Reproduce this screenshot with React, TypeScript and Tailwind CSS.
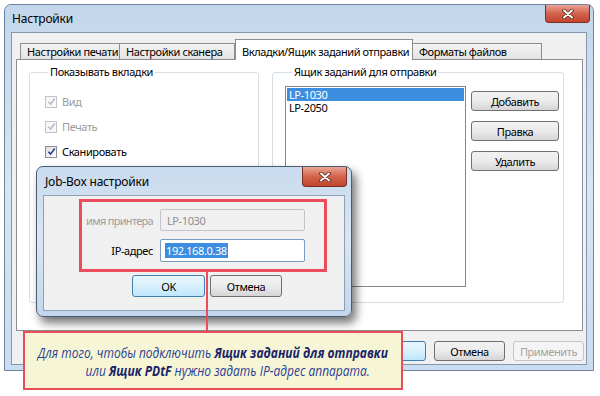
import type { ReactNode } from "react";

function CloseButton({ className = "" }: { className?: string }) {
  return (
    <div
      className={`flex items-center justify-center rounded-b-[4px] border border-t-0 border-[#7a2f24] bg-gradient-to-b from-[#e8a593] via-[#d3634d] to-[#c0452c] ${className}`}
    >
      <svg viewBox="0 0 12 10" className="h-[10px] w-[12px]">
        <path d="M2 1.5 L10 8.5 M10 1.5 L2 8.5" stroke="#5b2117" strokeWidth="3.6" strokeLinecap="round" />
        <path d="M2 1.5 L10 8.5 M10 1.5 L2 8.5" stroke="#ffffff" strokeWidth="2" strokeLinecap="round" />
      </svg>
    </div>
  );
}

function Btn({
  children,
  className = "",
  focused,
  disabled,
}: {
  children?: ReactNode;
  className?: string;
  focused?: boolean;
  disabled?: boolean;
}) {
  const look = focused
    ? "border-[#3c7fb1] bg-gradient-to-b from-[#eaf6fd] via-[#d9f0fc] to-[#bee6fd] text-black"
    : disabled
      ? "border-[#c4c4c4] bg-[#f4f4f4] text-[#a3a3a3]"
      : "border-[#707070] bg-gradient-to-b from-[#f2f2f2] via-[#ebebeb] to-[#d5d5d5] text-black";
  return (
    <div className={`flex items-center justify-center whitespace-nowrap rounded-[3px] border ${look} ${className}`}>
      {children}
    </div>
  );
}

function Check({ label, disabled }: { label: string; disabled?: boolean }) {
  return (
    <div className="flex h-[13px] items-center gap-[5px]">
      <span
        className={`flex h-[12px] w-[12px] items-center justify-center border ${
          disabled ? "border-[#c0c3c8] bg-[#f7f7f7]" : "border-[#8e8f8f] bg-gradient-to-br from-[#dcdcdc] to-white"
        }`}
      >
        <svg viewBox="0 0 10 10" className="h-[9px] w-[9px]">
          <path
            d="M1.6 5.3 L4 7.9 L8.6 1.6"
            fill="none"
            stroke={disabled ? "#b9b9b9" : "#26388f"}
            strokeWidth="1.7"
          />
        </svg>
      </span>
      <span className={disabled ? "text-[#9b9b9b]" : "text-black"}>{label}</span>
    </div>
  );
}

function Tab({ label, className = "" }: { label: string; className?: string }) {
  return (
    <div
      className={`flex h-[16px] items-center border border-b-0 border-[#8c8e94] bg-gradient-to-b from-[#f3f3f3] to-[#e3e3e3] pl-[6px] ${className}`}
    >
      {label}
    </div>
  );
}

export default function App() {
  return (
    <div className="relative h-[396px] w-[600px] overflow-hidden whitespace-nowrap bg-white font-['Noto_Sans',sans-serif] text-[11px] leading-[15px] tracking-[-0.4px] text-black">
      {/* main window */}
      <div className="relative ml-[4px] mt-[4px] flex h-[367px] w-[590px] flex-col rounded-t-[7px] border border-[#6d84a0] bg-gradient-to-b from-[#c3d6eb] via-[#d8e5f3] to-[#cadcef] px-[6px] pb-[5px]">
        <div className="flex h-[27px] items-center pl-[1px] text-[12px] tracking-[-0.2px]">Настройки</div>
        <CloseButton className="absolute right-[3px] top-0 h-[18px] w-[45px]" />

        <div className="flex flex-1 flex-col border border-[#8497b0] bg-[#f0f0f0]">
          {/* tabs */}
          <div className="ml-[8px] mt-[6px] flex h-[20px] items-end">
            <Tab label="Настройки печати" className="w-[100px]" />
            <Tab label="Настройки сканера" className="w-[115px] border-l-0" />
            <div className="relative z-10 -mb-px flex h-[21px] w-[178px] items-center border border-b-0 border-[#8c8e94] bg-white pl-[6px] pt-[2px]">
              Вкладки/Ящик заданий отправки
            </div>
            <Tab label="Форматы файлов" className="w-[129px] border-l-0" />
          </div>

          {/* panel */}
          <div className="ml-[4px] mr-[3px] flex h-[272px] gap-[13px] border border-[#8c8e94] bg-white pl-[12px] pt-[4px]">
            <fieldset className="h-[239px] w-[230px] rounded-[3px] border border-[#d5dfe5] pl-[15px]">
              <legend className="ml-[3px] px-[2px] leading-[16px]">Показывать вкладки</legend>
              <div className="flex flex-col gap-[12px] pt-[15px]">
                <Check label="Вид" disabled />
                <Check label="Печать" disabled />
                <Check label="Сканировать" />
              </div>
            </fieldset>
            <fieldset className="h-[239px] w-[292px] rounded-[3px] border border-[#d5dfe5] pl-[12px]">
              <legend className="ml-[7px] px-[2px] leading-[16px]">Ящик заданий для отправки</legend>
              <div className="flex gap-[5px] pt-[6px]">
                <div className="flex h-[201px] w-[181px] flex-col border border-[#828790] bg-white p-[1px]">
                  <div className="h-[13px] bg-[#3d8ee0] pl-[2px] leading-[13px] text-white">LP-1030</div>
                  <div className="h-[13px] pl-[2px] leading-[13px]">LP-2050</div>
                </div>
                <div className="flex flex-col gap-[10px] pt-[5px]">
                  <Btn className="h-[20px] w-[88px]">Добавить</Btn>
                  <Btn className="h-[20px] w-[88px]">Правка</Btn>
                  <Btn className="h-[20px] w-[88px]">Удалить</Btn>
                </div>
              </div>
            </fieldset>
          </div>

          {/* bottom buttons */}
          <div className="mr-[2px] mt-[10px] flex justify-end gap-[8px]">
            <Btn focused className="h-[20px] w-[71px]">ОК</Btn>
            <Btn className="h-[20px] w-[71px]">Отмена</Btn>
            <Btn disabled className="h-[20px] w-[71px]">Применить</Btn>
          </div>
        </div>
      </div>

      {/* Job-Box dialog */}
      <div className="absolute left-[36px] top-[166px] flex h-[151px] w-[316px] flex-col rounded-[7px] border border-[#4b5b70] bg-gradient-to-b from-[#c9dbee] via-[#d9e6f4] to-[#c3d7ec] px-[6px] pb-[5px] shadow-[4px_6px_10px_rgba(0,0,0,0.55)]">
        <div className="flex h-[28px] items-center pl-[2px] text-[12px] tracking-[-0.2px]">Job-Box настройки</div>
        <CloseButton className="absolute right-[4px] top-0 h-[20px] w-[45px]" />
        <div className="flex-1 border border-[#8da0b8] bg-[#f0f0f0]">
          <div className="ml-[35px] mt-[3px] flex h-[73px] w-[248px] flex-col gap-[8px] border-[3px] border-[#ec4d5c] pt-[7px]">
            <div className="flex items-center gap-[7px]">
              <div className="flex w-[71px] justify-end tracking-[-0.7px] text-[#9d9d9d]">имя принтера</div>
              <div className="flex h-[22px] w-[145px] items-center rounded-[2px] border border-[#c2c6cc] bg-[#f0f0f0] pl-[6px] text-[#8e8e8e]">
                LP-1030
              </div>
            </div>
            <div className="flex items-center gap-[7px]">
              <div className="flex w-[71px] justify-end">IP-адрес</div>
              <div className="flex h-[23px] w-[145px] items-center rounded-[2px] border border-[#7a9cc2] bg-white pl-[4px]">
                <span className="bg-[#3d8ee0] px-[1px] text-white">192.168.0.38</span>
              </div>
            </div>
          </div>
          <div className="ml-[88px] mt-[3px] flex gap-[5px]">
            <Btn focused className="h-[22px] w-[73px]">OK</Btn>
            <Btn className="h-[22px] w-[72px]">Отмена</Btn>
          </div>
        </div>
      </div>

      {/* annotation */}
      <div className="absolute left-[206px] top-[271px] h-[62px] w-[2px] bg-[#ec4d5c]" />
      <div className="absolute left-[23px] top-[331px] flex h-[59px] w-[380px] flex-col items-center justify-center overflow-hidden border-2 border-[#e94c5b] bg-[#f6f6d6] font-['Open_Sans',sans-serif] text-[15px] italic leading-[18px] tracking-normal text-[#2d3d94]">
        <div className="flex scale-x-[0.8] flex-col items-center">
          <p>
            Для того, чтобы подключить <b className="text-[#1b2468]">Ящик заданий для отправки</b>
          </p>
          <p className="pl-[37px]">
            или <b className="text-[#1b2468]">Ящик PDtF</b> нужно задать IP-адрес аппарата.
          </p>
        </div>
      </div>
    </div>
  );
}
